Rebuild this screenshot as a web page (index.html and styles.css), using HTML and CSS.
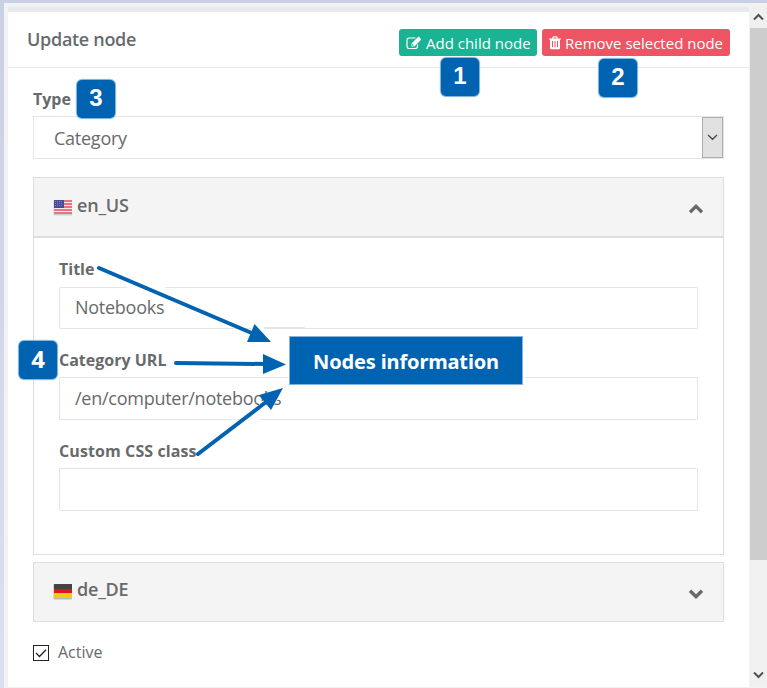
FILE: index.html
```html
<!DOCTYPE html>
<html lang="en">
<head>
<meta charset="utf-8">
<title>Update node</title>
<link rel="stylesheet" href="styles.css">
</head>
<body>
<div class="window">
  <main class="page">
    <header class="title-bar">
      <h5>Update node</h5>
      <div class="actions">
        <button class="btn add"><svg class="edit" width="16" height="14" viewBox="0 0 16 14"><path d="M9.500 2H3.200Q1 2 1 4.200V10.300Q1 12.500 3.200 12.500H9.300Q11.500 12.500 11.500 10.300V8.600" fill="none" stroke="currentColor" stroke-width="1.200"/><path d="M5.500 7.600L12 1.100Q12.600.5 13.200 1.100L14.800 2.700Q15.400 3.300 14.800 3.900L8.300 10.400H5.500Z" fill="currentColor"/><path d="M6.500 8.100V9.400H7.700" fill="none" stroke="#1ab394" stroke-width=".8"/></svg><span>Add child node</span></button>
        <button class="btn remove"><svg class="trash" width="12" height="14" viewBox="0 0 12 14"><path fill="currentColor" fill-rule="evenodd" d="M0 2.500H3L3.700.8Q3.900.3 4.500.3H7.500Q8.100.3 8.300.8L9 2.500H12V3.600H11V12Q11 13.300 9.800 13.300H2.200Q1 13.300 1 12V3.600H0ZM4.200 2.500H7.800L7.400 1.400H4.600ZM3 5V11.300H4V5ZM5.500 5V11.300H6.500V5ZM8 5V11.300H9V5Z"/></svg><span>Remove selected node</span></button>
      </div>
    </header>
    <form class="form">
      <label class="label type">Type</label>
      <div class="select"><span>Category</span><i class="drop"><svg width="11" height="7" viewBox="0 0 11 7"><path d="M1 1L5.500 5.300 10 1" fill="none" stroke="#444" stroke-width="1.200"/></svg></i></div>
      <section class="panel">
        <div class="panel-head open">
          <svg class="flag" width="20" height="17" viewBox="0 0 20 17"><rect x=".5" y="1" width="18.500" height="15.500" rx="1" fill="#cfcfcf"/><rect x="1" y="1" width="18" height="14" fill="#f5e9eb"/><path d="M1 2H19M1 5H19M1 8H19M1 11H19M1 14H19" stroke="#e64f5d" stroke-width="1.500"/><rect x="1" y="1" width="10" height="8" fill="#4a4c98"/><path d="M2 2.500H10M2 4.500H10M2 6.500H10" stroke="#9698ca" stroke-width=".7" stroke-dasharray="1 1"/></svg>
          <span>en_US</span>
          <svg class="chev" width="16" height="10" viewBox="0 0 16 10"><path d="M2 8.200L8 2.400 14 8.200" fill="none" stroke="#676a6c" stroke-width="3.300"/></svg>
        </div>
        <div class="panel-body">
          <label class="label">Title</label>
          <div class="input title-input">Notebooks</div>
          <label class="label">Category URL</label>
          <div class="input">/en/computer/notebooks</div>
          <label class="label css-label">Custom CSS class</label>
          <div class="input"></div>
        </div>
      </section>
      <section class="panel">
        <div class="panel-head">
          <svg class="flag" width="20" height="17" viewBox="0 0 20 17"><rect x=".5" y="1" width="18.500" height="15.500" rx="1" fill="#bbb"/><rect x="1" y="1" width="18" height="5" fill="#444"/><rect x="1" y="6" width="18" height="5" fill="#dd1620"/><rect x="1" y="10" width="18" height="5" fill="#f2cb13"/></svg>
          <span>de_DE</span>
          <svg class="chev" width="16" height="10" viewBox="0 0 16 10"><path d="M2 1.800L8 7.600 14 1.800" fill="none" stroke="#676a6c" stroke-width="3.300"/></svg>
        </div>
      </section>
      <div class="active"><svg width="16" height="16" viewBox="0 0 16 16"><rect x=".5" y=".5" width="15" height="15" fill="#fff" stroke="#222"/><path d="M3 8L6.500 11.500 13 4.800" fill="none" stroke="#222" stroke-width="1.300"/></svg><span>Active</span></div>
    </form>
  </main>
  <aside class="scroll">
    <svg width="11" height="8" viewBox="0 0 11 8"><path d="M1 6.500L5.500 2 10 6.500" fill="none" stroke="#505050" stroke-width="2"/></svg>
    <div class="thumb"></div>
    <svg class="down" width="11" height="8" viewBox="0 0 11 8"><path d="M1 1.500L5.500 6 10 1.500" fill="none" stroke="#505050" stroke-width="2"/></svg>
  </aside>
</div>
<svg class="arrows" width="767" height="688" viewBox="0 0 767 688">
  <path d="M127 287.500H165M251 328.500H264M241 419.500H259" stroke="#fff" stroke-width="2"/>
  <path d="M264 328H305" stroke="#e5e6e7" stroke-width="2"/>
  <path d="M259 401H266V408H259ZM268 390H284V400H277L272 408H268Z" fill="#fff"/>
  <path d="M99 268L254 334M176 363L266 364M198 454L266 402" fill="none" stroke="#0063b1" stroke-width="4" stroke-linecap="round"/>
  <path d="M254.500 324L271 342H247ZM263 354L286 364.500 263 374ZM283 388L259 395 271 410Z" fill="#0063b1"/>
</svg>
<b class="badge one">1</b><b class="badge two">2</b><b class="badge three">3</b><b class="badge four">4</b>
<div class="callout"><span>Nodes information</span></div>
</body>
</html>
```
FILE: styles.css
```css
* { box-sizing: border-box; }
body { margin: 0; width: 767px; height: 688px; overflow: hidden; position: relative; font: 16px/22px "Open Sans", sans-serif; color: #676a6c; }
svg { display: block; flex: none; }
.window { height: 688px; display: flex; padding: 7px 0 1px 8px; background: linear-gradient(#f2f2f2, #f2f2f2) 4px 3px no-repeat, linear-gradient(#c8d1e3, #d8e1ef); }
.page { width: 741px; background: #fff; border-top: 5px solid #e7eaec; }
.title-bar { height: 56px; border-bottom: 1px solid #e7eaec; display: flex; justify-content: space-between; padding: 17px 19px 0; }
h5 { margin: -1px 0 0; font-size: 18px; line-height: 22px; font-weight: 600; letter-spacing: -.3px; }
.actions { display: flex; gap: 5px; }
.btn { height: 27px; border: 0; border-radius: 3px; color: #fff; font: 15px/27px "Open Sans", sans-serif; padding: 0 7px; display: flex; align-items: center; white-space: nowrap; }
.btn span { display: block; padding-top: 2px; }
.btn svg { margin-top: 1px; }
.add { width: 138px; background: #1ab394; gap: 4px; }
.remove { width: 188px; background: #ed5565; gap: 4px; }
.form { padding: 20px 25px 0; width: 741px; }
.label { display: block; font-weight: 700; font-size: 16px; line-height: 22px; }
.css-label { letter-spacing: .1px; }
.select { margin-top: 6px; height: 43px; border: 1px solid #e5e6e7; display: flex; justify-content: space-between; padding-left: 20px; font-size: 18px; line-height: 42px; letter-spacing: -.25px; width: 691px; }
.drop { width: 21px; height: 41px; border: 1px solid #adadad; background: #e1e1e1; display: flex; align-items: center; justify-content: center; }
.panel { width: 691px; border: 1px solid #ddd; margin-top: 18px; }
.panel + .panel { margin-top: 7px; }
.panel-head { height: 58px; background: #f4f4f4; display: flex; align-items: center; padding: 0 19px; font-size: 18px; font-weight: 600; letter-spacing: -.2px; }
.panel-head span { margin: -6px auto 0 4px; }
.panel-head.open { height: 60px; border-bottom: 2px solid #ddd; }
.open span { margin-top: -4px; }
.open .flag { margin-top: 1px; }
.flag { margin-top: -1px; }
.chev { margin-top: 3px; }
.panel-body { height: 316px; padding: 20px 25px 0; }
.input { height: 43px; margin: 6px 0 20px; border: 1px solid #e5e6e7; border-radius: 1px; padding-left: 15px; font-size: 18px; line-height: 40px; letter-spacing: -.26px; }
.title-input { height: 42px; margin-top: 7px; line-height: 38px; }
.active { display: flex; align-items: center; gap: 9px; margin-top: 19px; height: 22px; }
.active svg { margin-top: 2px; }
.scroll { margin-left: 1px; width: 17px; background: #f0f0f0; display: flex; flex-direction: column; align-items: center; padding: 6px 0 8px; }
.thumb { width: 17px; height: 532px; margin-top: 7px; background: #cdcdcd; }
.down { margin-top: auto; }
.arrows { position: absolute; left: 0; top: 0; }
.badge { position: absolute; width: 38px; height: 38px; border-radius: 5px; background: #0063b1; box-shadow: 0 0 1px 1px #77add8; color: #fff; font: bold 24px/36px "Liberation Sans", sans-serif; text-align: center; }
.one { left: 441px; top: 58px; }
.two { left: 599px; top: 59px; }
.three { left: 77px; top: 80px; }
.four { left: 19px; top: 341px; font-family: "Open Sans", sans-serif; }
.callout { position: absolute; left: 290px; top: 337px; width: 232px; height: 47px; background: #0063b1; box-shadow: 0 0 0 1px #84b4dc; color: #fff; font: bold 20px/49px "Noto Sans", sans-serif; letter-spacing: -.15px; text-align: center; white-space: nowrap; }
```
